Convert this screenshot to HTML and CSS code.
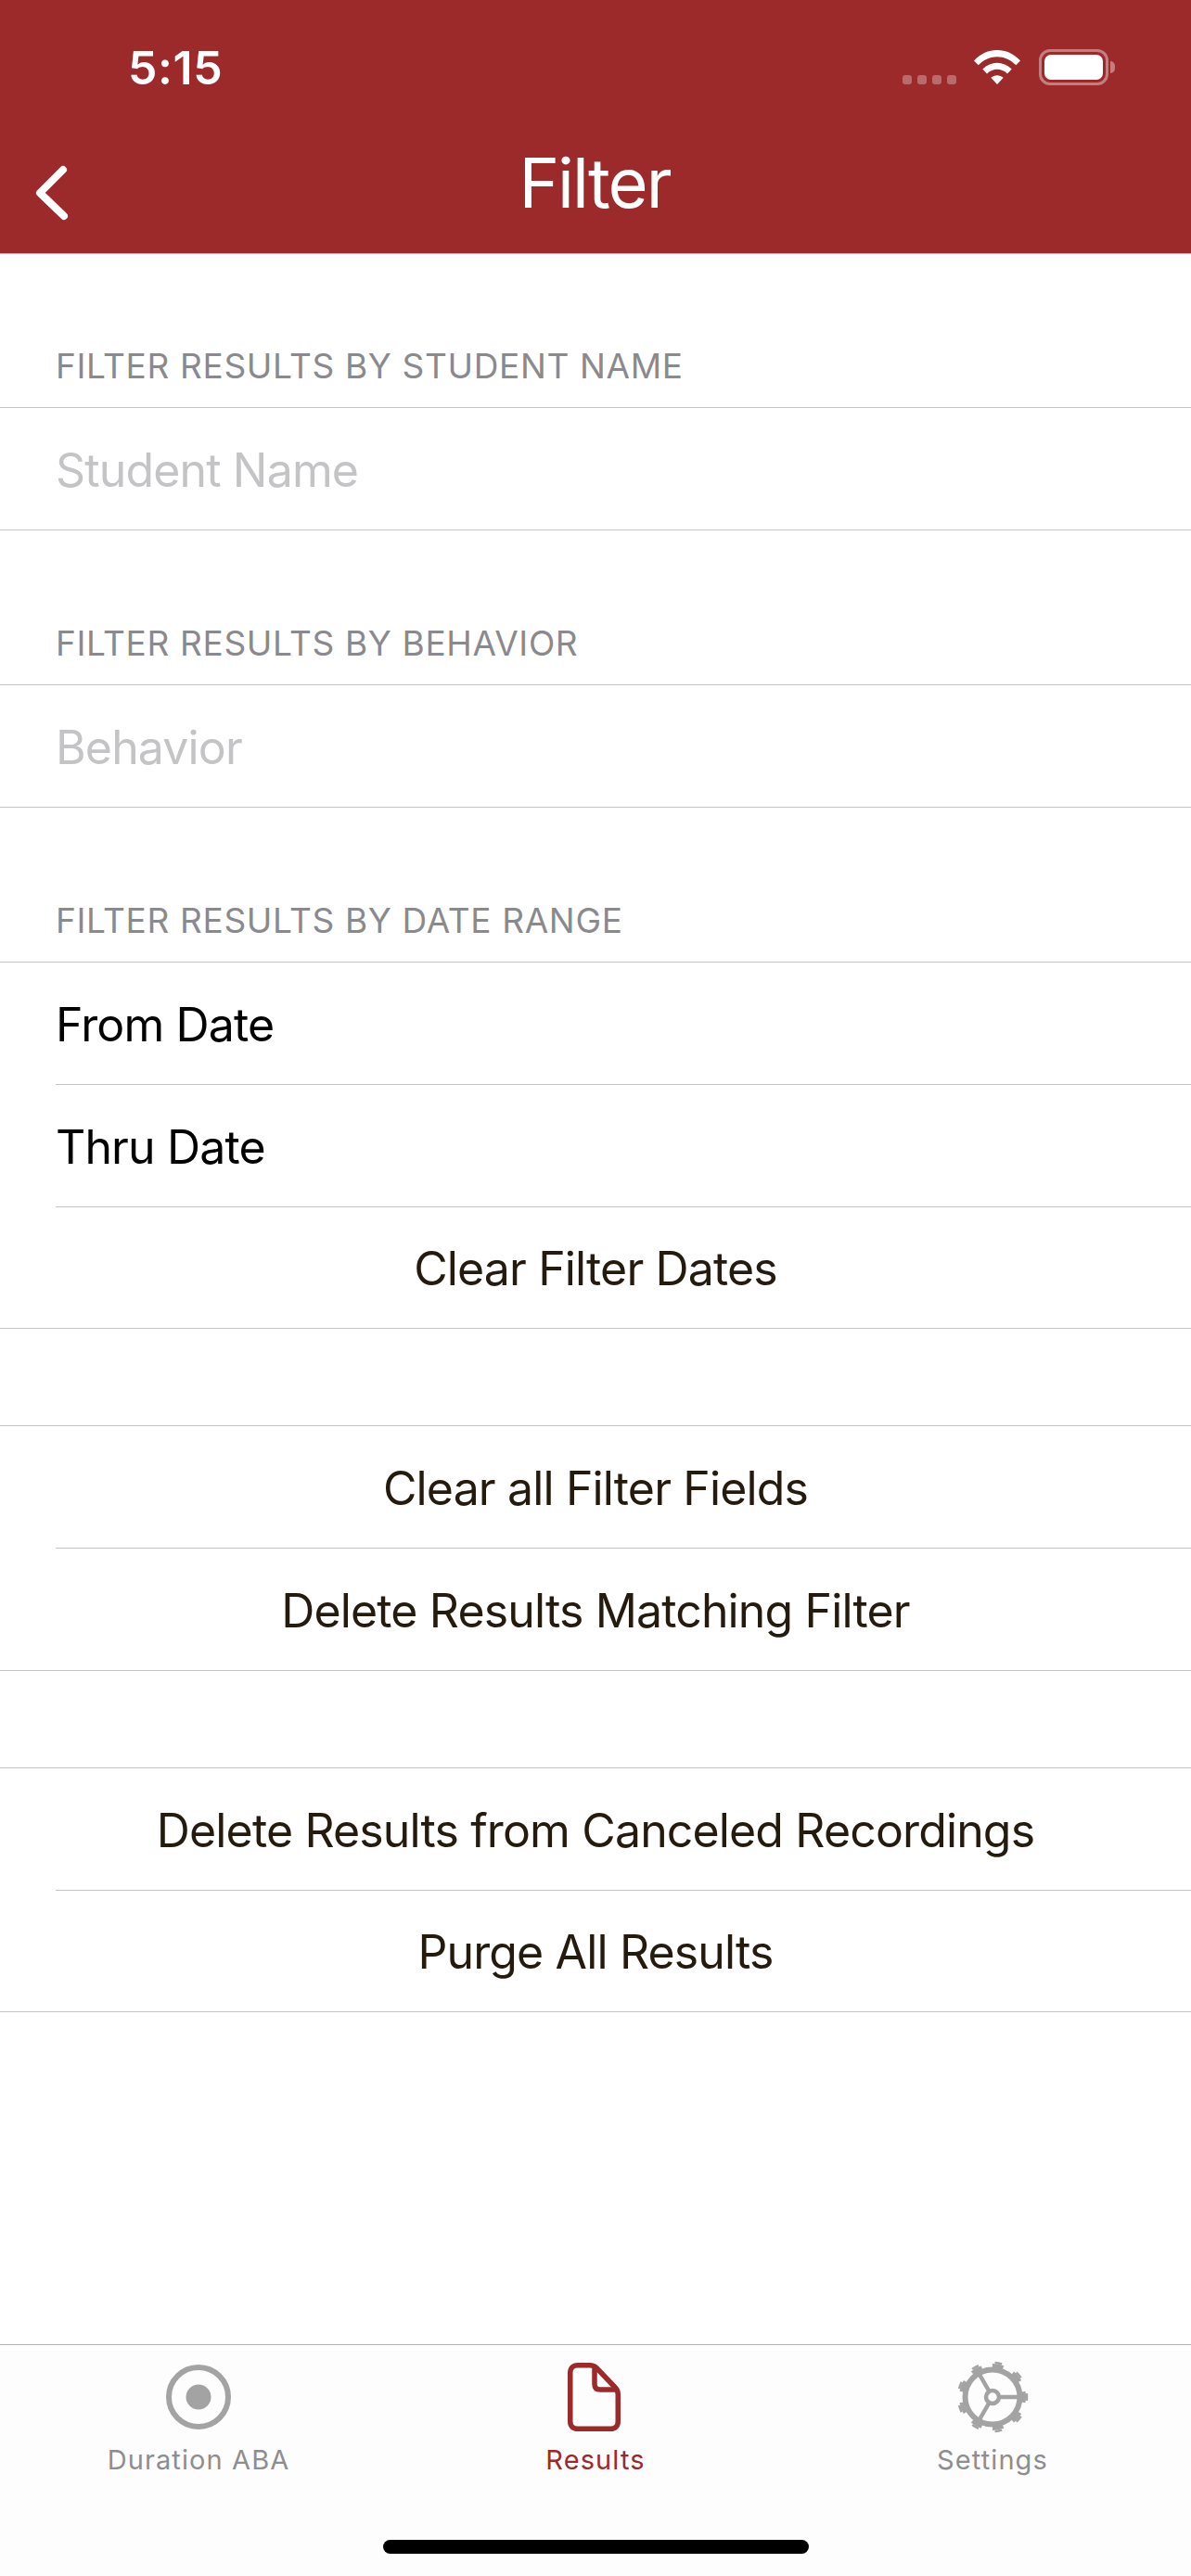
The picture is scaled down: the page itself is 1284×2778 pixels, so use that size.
FILE: index.html
```html
<!DOCTYPE html>
<html lang="en">
<head>
<meta charset="utf-8">
<title>Filter</title>
<link rel="stylesheet" href="styles.css">
</head>
<body>
<div class="screen">
  <header class="topbar">
    <div class="status">
      <span class="time">5:15</span>
      <div class="status-icons">
        <div class="signal"><i></i><i></i><i></i><i></i></div>
        <svg class="wifi" viewBox="0 0 50 37" aria-hidden="true">
          <path d="M0 11.5 C14 -3.8 36 -3.8 50 11.5 L45.3 16.3 C33.5 4.2 16.5 4.2 4.7 16.3 Z"/>
          <path d="M9.3 20.6 C18.5 11.6 31.5 11.6 40.7 20.6 L36 25.4 C29.4 19.2 20.6 19.2 14 25.4 Z"/>
          <path d="M18.3 29.8 C22.4 26.4 27.6 26.4 31.7 29.8 L25 37 Z"/>
        </svg>
        <div class="battery"><div class="battery-fill"></div></div>
        <div class="battery-cap"></div>
      </div>
    </div>
    <div class="navbar">
      <svg class="back" viewBox="0 0 40 64" aria-hidden="true"><path d="M31 5 L6 30 L32 55"/></svg>
      <h1 class="title">Filter</h1>
    </div>
  </header>

  <main class="content">
    <section class="section section-first">
      <h2 class="section-title">FILTER RESULTS BY STUDENT NAME</h2>
      <div class="group"><div class="row placeholder">Student Name</div></div>
    </section>
    <section class="section">
      <h2 class="section-title">FILTER RESULTS BY BEHAVIOR</h2>
      <div class="group"><div class="row placeholder">Behavior</div></div>
    </section>
    <section class="section">
      <h2 class="section-title">FILTER RESULTS BY DATE RANGE</h2>
      <div class="group">
        <div class="row label">From Date</div>
        <div class="row label">Thru Date</div>
        <div class="row action">Clear Filter Dates</div>
      </div>
    </section>
    <section class="section section-plain">
      <div class="group">
        <div class="row action">Clear all Filter Fields</div>
        <div class="row action">Delete Results Matching Filter</div>
      </div>
    </section>
    <section class="section section-plain">
      <div class="group">
        <div class="row action">Delete Results from Canceled Recordings</div>
        <div class="row action">Purge All Results</div>
      </div>
    </section>
  </main>

  <footer class="tabbar">
    <nav class="tabs">
      <div class="tab">
        <svg class="tab-icon" viewBox="0 0 80 80" aria-hidden="true">
          <circle class="gray-stroke" cx="40" cy="40" r="32" stroke-width="6"/>
          <circle class="gray-fill" cx="40" cy="40" r="13.5"/>
        </svg>
        <span class="tab-label">Duration ABA</span>
      </div>
      <div class="tab tab-active">
        <svg class="tab-icon" viewBox="0 0 80 80" aria-hidden="true">
          <path class="red-stroke" stroke-width="5.5" d="M20.75 5.75 H34 C37 5.75 39 6.5 41 8.5 L61.5 30 C63.5 32 64.25 34 64.25 37 V66.25 C64.25 71.5 61.25 74.25 56.25 74.25 H20.75 C15.75 74.25 12.75 71.5 12.75 66.25 V13.75 C12.75 8.75 15.75 5.75 20.75 5.75 Z"/>
          <path class="red-stroke" stroke-width="5.5" d="M39 6 V26 C39 30 41 32 45 32 H64"/>
        </svg>
        <span class="tab-label">Results</span>
      </div>
      <div class="tab">
        <svg class="tab-icon" viewBox="0 0 80 80" aria-hidden="true">
          <circle class="gray-stroke" cx="40" cy="40" r="29.5" stroke-width="6"/>
          <circle class="gray-stroke" cx="40" cy="40" r="34" stroke-width="4" pathLength="180" stroke-dasharray="10 10" stroke-dashoffset="5"/>
          <circle class="gray-stroke" cx="40" cy="40" r="37" stroke-width="2.5" pathLength="180" stroke-dasharray="6 14" stroke-dashoffset="3"/>
          <circle class="gray-stroke" cx="40" cy="40" r="7" stroke-width="4.5"/>
          <path class="gray-stroke" stroke-width="4.5" d="M47 40 H69 M36.5 34 L25 14 M36.5 46 L25 66"/>
        </svg>
        <span class="tab-label">Settings</span>
      </div>
    </nav>
    <div class="home-indicator"></div>
  </footer>
</div>
</body>
</html>
```
FILE: styles.css
```css
* { box-sizing: border-box; }
html, body { margin: 0; padding: 0; background: #fff; }
body { font-family: Inter, "Liberation Sans", sans-serif; }

.screen {
  width: 1284px;
  height: 2778px;
  display: flex;
  flex-direction: column;
  overflow: hidden;
  background: #fff;
}

/* Top */
.topbar {
  background: #9c2a2b;
  color: #fff;
  height: 274px;
  flex: none;
  border-bottom: 1px solid #b9b9b9;
}
.status {
  height: 141px;
  display: flex;
  justify-content: space-between;
  padding: 41px 82px 0 138px;
}
.time { font-size: 50px; font-weight: 600; line-height: 64px; letter-spacing: 0.6px; }
.status-icons { display: flex; align-items: flex-start; padding-top: 12px; }
.signal { display: flex; gap: 6px; margin-top: 28px; margin-right: 19px; }
.signal i { width: 10px; height: 10px; border-radius: 3px; background: rgba(255,255,255,.3); }
.wifi { width: 50px; height: 37px; fill: #fff; margin-top: 1px; margin-right: 20px; }
.battery {
  width: 75px;
  height: 39px;
  border: 3px solid rgba(255,255,255,.4);
  border-radius: 12px;
  padding: 3px;
}
.battery-fill { width: 100%; height: 100%; background: #fff; border-radius: 7px; }
.battery-cap {
  width: 5px;
  height: 13px;
  margin: 13px 0 0 2px;
  background: rgba(255,255,255,.4);
  border-radius: 0 6px 6px 0;
}
.navbar {
  height: 132px;
  display: flex;
  align-items: center;
  justify-content: center;
  position: relative;
}
.back {
  position: absolute;
  left: 37px;
  top: 37px;
  width: 40px;
  height: 64px;
  fill: none;
  stroke: #fff;
  stroke-width: 8;
  stroke-linecap: round;
  stroke-linejoin: round;
}
.title { margin: 0 2px 20px 0; font-size: 74px; font-weight: 400; line-height: 80px; letter-spacing: -2px; }

/* List */
.content { flex: 1; min-height: 0; }
.section-title {
  margin: 0;
  height: 166px;
  padding: 0 60px 20px;
  display: flex;
  align-items: flex-end;
  font-size: 37px;
  font-weight: 400;
  line-height: 48px;
  letter-spacing: 0.65px;
  color: #8a8a8e;
}
.section-first .section-title { height: 165px; }
.group { border-top: 1px solid #c6c6c8; border-bottom: 1px solid #c6c6c8; }
.section-plain { margin-top: 104px; }
.row {
  height: 131px;
  display: flex;
  align-items: center;
  padding: 3px 60px 0;
  font-size: 50px;
  line-height: 64px;
  letter-spacing: -0.86px;
}
.row + .row {
  height: 131.5px;
  padding-top: 4px;
  background: linear-gradient(#c6c6c8, #c6c6c8) 60px 0 / 100% 1px no-repeat;
}
.placeholder { color: #c4c4c6; }
.label { color: #000; }
.action { justify-content: center; color: #241a0e; }

/* Tabs */
.tabbar {
  flex: none;
  height: 250px;
  background: #fdfdfd;
  border-top: 1px solid #b2b2b2;
  display: flex;
  flex-direction: column;
  align-items: center;
}
.tabs { width: 100%; display: grid; grid-template-columns: repeat(3, 1fr); padding-top: 16px; }
.tab { display: flex; flex-direction: column; align-items: center; color: #8e8e8e; }
.tab-active { color: #9c2a2b; }
.tab-icon { width: 80px; height: 80px; display: block; }
.tab-label { font-size: 29px; line-height: 36px; letter-spacing: 1.1px; margin-top: 10px; }
.gray-stroke { fill: none; stroke: #a3a3a3; }
.gray-fill { fill: #a3a3a3; }
.red-stroke { fill: none; stroke: #9c2a2b; stroke-linejoin: round; }
.home-indicator {
  width: 459px;
  height: 15px;
  margin-top: 68px;
  border-radius: 8px;
  background: #000;
}
```
